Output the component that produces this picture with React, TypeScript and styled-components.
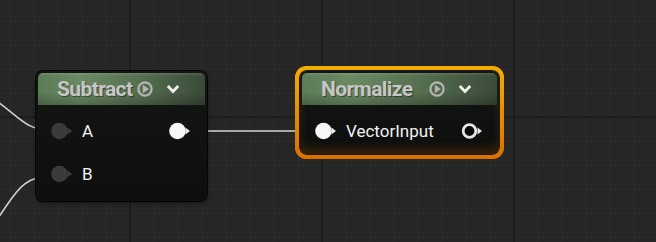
import React from 'react';
import styled, { createGlobalStyle, css } from 'styled-components';

const GlobalStyle = createGlobalStyle`
	html, body {
		margin: 0;
		padding: 0;
		background: #262626;
	}
	body {
		font-family: Roboto, "Liberation Sans", sans-serif;
	}
`;

const Canvas = styled.div`
	position: relative;
	width: 656px;
	height: 242px;
	overflow: hidden;
	background-color: #262626;
	background-image:
		linear-gradient(to right, #1d1d1d 2px, transparent 2px),
		linear-gradient(to bottom, #1d1d1d 2px, transparent 2px),
		linear-gradient(to right, #2c2c2c 1px, transparent 1px),
		linear-gradient(to bottom, #2c2c2c 1px, transparent 1px);
	background-size: 192px 192px, 192px 192px, 24px 24px, 24px 24px;
	background-position: 129px 0, 0 116px, 10px 0, 0 21px;
`;

const Wires = styled.svg`
	position: absolute;
	left: 0;
	top: 0;
	pointer-events: none;
`;

const NodeBox = styled.div<{ $x: number; $y: number; $w: number; $selected?: boolean }>`
	position: absolute;
	left: ${p => p.$x}px;
	top: ${p => p.$y}px;
	width: ${p => p.$w}px;
	box-sizing: border-box;
	padding: 2px;
	border-radius: 7px;
	background: linear-gradient(to bottom, #141614, #0d0e0d);
	box-shadow: 0 0 0 1px #050505, 0 2px 4px rgba(0, 0, 0, 0.5);

	${p => p.$selected && css`
		box-shadow:
			0 0 0 1px #1a1a1a,
			inset 0 -6px 8px rgba(120, 70, 0, 0.35),
			0 0 0 5px #e58a00;
		&::after {
			content: '';
			position: absolute;
			inset: -5px;
			border-radius: 11px;
			border: 4px solid transparent;
			background: linear-gradient(to bottom, #f2ae00, #dc6e00) border-box;
			-webkit-mask: linear-gradient(#000 0 0) padding-box, linear-gradient(#000 0 0);
			-webkit-mask-composite: xor;
			mask-composite: exclude;
			pointer-events: none;
		}
	`}
`;

const Header = styled.div`
	display: flex;
	align-items: center;
	height: 32px;
	padding: 0 25px 0 19px;
	border-radius: 5px 5px 0 0;
	background:
		linear-gradient(to bottom, rgba(255, 255, 255, 0.12) 0, rgba(255, 255, 255, 0) 3px, rgba(0, 0, 0, 0) 60%, rgba(0, 0, 0, 0.22) 100%),
		linear-gradient(to right, #5c7b56 0%, #6a8a63 25%, #557050 60%, #3b4a39 100%);
`;

const Title = styled.span`
	flex: 1;
	color: #c6c6c6;
	font-size: 21px;
	font-weight: 700;
	letter-spacing: -0.6px;
	text-shadow: 1px 1px 1px rgba(0, 0, 0, 0.45);
`;

const Chevron = styled.svg`
	margin-left: 13px;
`;

const Body = styled.div<{ $tight?: boolean }>`
	padding: 4px 0 ${p => (p.$tight ? 0 : 4)}px;
`;

const Row = styled.div`
	display: flex;
	align-items: center;
	height: 43px;
	padding: 0 14px 0 13px;
`;

const Label = styled.span`
	flex: 1;
	margin-left: 9px;
	color: #f2f2f2;
	font-size: 17px;
	font-weight: 400;
`;

type PinKind = 'empty' | 'filled' | 'ring';

const Pin: React.FC<{ kind: PinKind }> = ({ kind }) => (
	<svg width="22" height="18" viewBox="0 0 22 18">
		{ kind === 'ring'
			? <circle cx="8.5" cy="9" r="6.3" fill="#0b0b0b" stroke="#e6e6e6" strokeWidth="2.8" />
			: <circle cx="8.5" cy="9" r="8.3" fill={ kind === 'filled' ? '#f7f7f7' : '#3b3b3b' } /> }
		<polygon points="16.5,5.5 21,9 16.5,12.5" fill={ kind === 'empty' ? '#3b3b3b' : '#e8e8e8' } />
	</svg>
);

const PlayIcon = () => (
	<svg width="16" height="16" viewBox="0 0 16 16">
		<circle cx="8" cy="8" r="6.6" fill="none" stroke="#b4b4b4" strokeWidth="2.2" />
		<polygon points="5.8,3.8 12,8 5.8,12.2" fill="#b4b4b4" />
	</svg>
);

const ChevronIcon = () => (
	<Chevron width="14" height="10" viewBox="0 0 14 10">
		<polyline points="1.8,2 7,7.4 12.2,2" fill="none" stroke="#f0f0f0" strokeWidth="2.8" />
	</Chevron>
);

interface PinRow {
	input: PinKind;
	label: string;
	output?: PinKind;
}

interface NodeProps {
	title: string;
	x: number;
	y: number;
	width: number;
	rows: PinRow[];
	selected?: boolean;
}

const GraphNode: React.FC<NodeProps> = ({ title, x, y, width, rows, selected }) => (
	<NodeBox $x={ x } $y={ y } $w={ width } $selected={ selected }>
		<Header>
			<Title>{ title }</Title>
			<PlayIcon />
			<ChevronIcon />
		</Header>
		<Body $tight={ selected }>
			{ rows.map(r => (
				<Row key={ r.label }>
					<Pin kind={ r.input } />
					<Label>{ r.label }</Label>
					{ r.output && <Pin kind={ r.output } /> }
				</Row>
			)) }
		</Body>
	</NodeBox>
);

const App: React.FC = () => {
	return (
		<Canvas>
			<GlobalStyle />
			<Wires width="656" height="242">
				<path d="M -20 90 C 18 112 22 131 54 131" fill="none" stroke="#cfcfcf" strokeWidth="1.6" />
				<path d="M -6 224 C 20 186 24 176 54 176" fill="none" stroke="#cfcfcf" strokeWidth="1.6" />
				<path d="M 188 131 L 318 131" fill="none" stroke="#d4d4d4" strokeWidth="1.6" />
			</Wires>
			<GraphNode
				title="Subtract"
				x={ 36 }
				y={ 71 }
				width={ 171 }
				rows={ [
					{ input: 'empty', label: 'A', output: 'filled' },
					{ input: 'empty', label: 'B' },
				] }
			/>
			<GraphNode
				title="Normalize"
				x={ 300 }
				y={ 71 }
				width={ 199 }
				selected
				rows={ [
					{ input: 'filled', label: 'VectorInput', output: 'ring' },
				] }
			/>
		</Canvas>
	);
};

export default App;
